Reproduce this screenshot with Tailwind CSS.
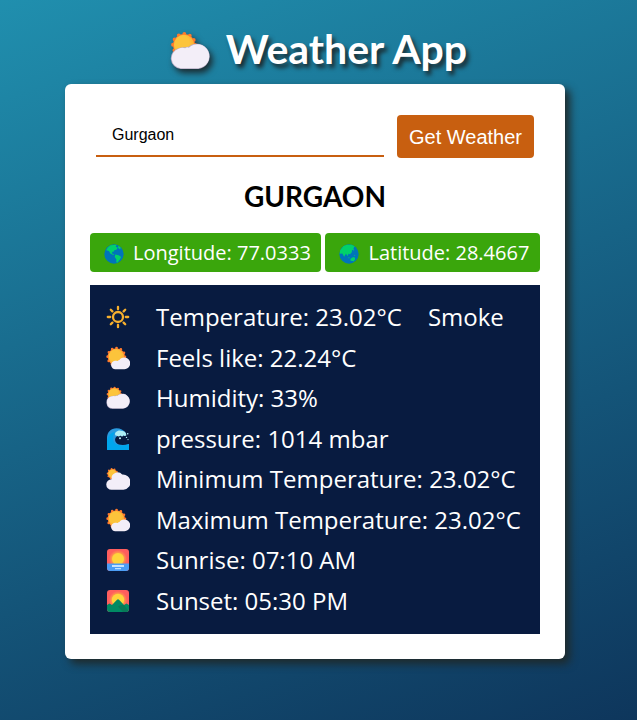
<!DOCTYPE html>
<html lang="en">
<head>
<meta charset="utf-8">
<meta name="viewport" content="width=device-width, initial-scale=1">
<title>Weather App</title>
<script src="https://cdn.jsdelivr.net/npm/@tailwindcss/browser@4"></script>
</head>
<body class="min-h-screen bg-linear-160 from-[#208fae] to-[#0e365c] bg-fixed font-['Open_Sans',sans-serif]">

<!-- Icon library -->
<svg class="absolute size-0" aria-hidden="true">
  <defs>
    <radialGradient id="sunFill" cx="0.4" cy="0.4" r="0.7"><stop offset="0.5" stop-color="#fcc43b"/><stop offset="1" stop-color="#ffa52e"/></radialGradient>
    <radialGradient id="glow" gradientUnits="userSpaceOnUse" cx="12" cy="11" r="10"><stop offset="0.6" stop-color="#ff9a4a"/><stop offset="0.9" stop-color="#ff5e5e"/></radialGradient>
  </defs>
  <symbol id="cloudy" viewBox="0 0 24 24">
    <circle cx="8.4" cy="8.4" r="6.6" fill="#ff8330" stroke="#ff7a2c" stroke-width="2.3" stroke-linecap="round" stroke-dasharray="0 3.456"/>
    <circle cx="8.4" cy="8.4" r="6.1" fill="url(#sunFill)"/>
    <path d="M6.4 22.8A6.4 6.4 0 0 1 5 10.3Q6.9 9.6 9 9.8Q10.2 9.2 11.2 9.5A7.6 7.6 0 1 1 17 22.8Z" fill="#b9aec6"/>
    <path d="M6.4 22.3A6 6 0 0 1 5.2 10.6Q7 9.8 9.1 10.3Q10.3 9.5 11.3 10A7.2 7.2 0 1 1 17 22.3Z" fill="#f3eef8"/>
  </symbol>
  <symbol id="sunny-cloud" viewBox="0 0 24 24">
    <circle cx="10.3" cy="10.8" r="8.6" fill="#ff8330" stroke="#ff7a2c" stroke-width="2.8" stroke-linecap="round" stroke-dasharray="0 4.503"/>
    <circle cx="10.3" cy="10.8" r="7.7" fill="url(#sunFill)"/>
    <path d="M9.6 23.2A4.2 4.2 0 0 1 9 14.8Q10.5 14.5 11.7 15Q12.5 14 13.4 14A5.9 5.9 0 1 1 18 23.2Z" fill="#f3eef8"/>
  </symbol>
  <symbol id="big-cloud" viewBox="0 0 24 24">
    <circle cx="6.5" cy="6.8" r="4.8" fill="#ff8330" stroke="#ff7a2c" stroke-width="2" stroke-linecap="round" stroke-dasharray="0 3.016"/>
    <circle cx="6.5" cy="6.8" r="4.2" fill="url(#sunFill)"/>
    <path d="M5.5 22.8A5.3 5.3 0 0 1 5.6 12.2A6 6 0 0 1 16.2 7.6A7.6 7.6 0 0 1 17.5 22.8Z" fill="#f3eef8"/>
  </symbol>
  <symbol id="sun" viewBox="0 0 24 24">
    <g fill="none" stroke="#f7b02e" stroke-width="2.3" stroke-linecap="round"><circle cx="12" cy="12" r="5"/><path d="M12 1.8V4.2M12 19.8V22.2M1.8 12H4.2M19.8 12H22.2M4.8 4.8L6.4 6.4M17.6 17.6L19.2 19.2M4.8 19.2L6.4 17.6M17.6 6.4L19.2 4.8"/></g>
  </symbol>
  <symbol id="wave" viewBox="0 0 24 24">
    <path d="M1 23V11C1 5 5 1.2 10.5 1.2C14.5 1.2 17.5 3 20 6.2L19.5 8.5H12C9 10 8.4 13 10 15.5C12.5 18.5 18 18.5 23 17V23Z" fill="#2a9be0"/>
    <path d="M1 23V13C2.5 8 5 5.5 9 5C7.5 8 6.5 10 7.2 13.5C8.5 18 15 20 23 17V23Z" fill="#00a6ed"/>
    <path d="M10 5C11.5 3.4 14 3 16 4Q18.5 3.8 19.8 6L20.4 8.2Q18.8 9.8 17.5 8.2Q16.2 10.5 14.5 8.4Q12.5 10.4 11 8.8Q9.2 9 9 7.2Q8.8 5.8 10 5Z" fill="#aeeef5"/>
    <circle cx="14" cy="11.2" r="1" fill="#c5f3f7"/><circle cx="21.7" cy="6.8" r=".8" fill="#aeeef5"/><circle cx="20.5" cy="10.4" r=".7" fill="#aeeef5"/><circle cx="22" cy="12.6" r=".6" fill="#aeeef5"/>
  </symbol>
  <symbol id="sunrise" viewBox="0 0 24 24">
    <rect x="1" y="1" width="22" height="22" rx="3" fill="url(#glow)"/>
    <circle cx="12" cy="11" r="6" fill="#ffd43b"/>
    <path d="M1 15.6H23V20A3 3 0 0 1 20 23H4A3 3 0 0 1 1 20Z" fill="#4b9df5"/>
    <path d="M6 17H18V19H6ZM9 20H15V21.2H9Z" fill="#c2e2ff"/>
  </symbol>
  <symbol id="sunset" viewBox="0 0 24 24">
    <rect x="1" y="1" width="22" height="22" rx="3" fill="url(#glow)"/>
    <circle cx="12" cy="11" r="6.2" fill="#ffd43b"/>
    <path d="M1 16L3.5 14.4L6 16L11 10.8Q12 9.8 13 10.8L18 16L20.5 14.4L23 16V20A3 3 0 0 1 20 23H4A3 3 0 0 1 1 20Z" fill="#008a63"/>
    <path d="M12 17.5L15 16L18 16L22.4 21.8Q21.4 23 20 23H17Z" fill="#067a58"/>
  </symbol>
  <symbol id="globe-americas" viewBox="0 0 24 24">
    <circle cx="12" cy="12" r="11.6" fill="#0074ba"/>
    <path d="M4.5 4.2L8 1.5L15 .9L14 3.2L16.5 4.6L14.8 7L12.5 7.6L11 9.6L9.4 9.2L9.8 11.4L12.4 12.8L11 13.2L7.6 11.4L6 8.4L2.6 7.4ZM17.4 2.2L20.4 4.8L18.8 6.2L16.8 4.2ZM13.6 12.6L17.6 13.4L20.6 15.6L18.8 18.8L16 22.4L14.8 22L14.8 18.2L12.8 15.6Z" fill="#00d26a"/>
  </symbol>
  <symbol id="globe-asia" viewBox="0 0 24 24">
    <circle cx="12" cy="12" r="11.6" fill="#0074ba"/>
    <path d="M5.5 2.4L9.5 .8L15 .9L18.8 2.8L17.4 5L18 8L15.6 7L15.4 10L13.2 12.4L11.2 11.6L10.6 14.8L8.4 11.6L6.2 15.2L4 11.4L.8 11.8L1.4 7.4ZM13.6 18L16 16.2L18.4 15.6L19.6 18L17.8 20.6L14 20.2ZM10.6 16L13 16.4L12 17.4ZM17.6 13L19.6 13.8L18.6 14.4Z" fill="#00d26a"/>
  </symbol>
</svg>

<header class="pt-6 pb-2.5">
  <h1 class="flex items-center justify-center gap-4 font-['Lato',sans-serif] text-[41px] leading-[50px] font-bold text-white [text-shadow:3px_4px_4px_#1b2b30]">
    <svg class="mt-1 size-10 drop-shadow-[3px_4px_3px_#1b2b30]" aria-hidden="true"><use href="#cloudy"/></svg>
    Weather App
  </h1>
</header>

<main class="flex justify-center pr-[7px] pb-10">
  <section class="flex min-h-[575px] w-full max-w-[500px] flex-col rounded-md bg-white p-[25px] shadow-[5px_5px_8px_#1f2a2b]">
    <form class="flex gap-[13px] p-1.5" onsubmit="return false">
      <input type="text" aria-label="City" value="Gurgaon" class="mb-px min-w-0 flex-1 border-b-2 border-[#c85f10] px-4 font-['Liberation_Sans',Arial,sans-serif] text-base text-black outline-none">
      <button type="submit" class="h-[43px] rounded bg-[#c85f10] px-3 font-['Liberation_Sans',Arial,sans-serif] text-xl text-white">Get Weather</button>
    </form>

    <h2 class="mt-3 mb-4 text-center font-['Lato',sans-serif] text-[28px] leading-[41px] font-bold text-black">GURGAON</h2>

    <div class="flex gap-1 text-xl leading-[39px] text-white">
      <p class="flex grow items-center gap-[9px] rounded bg-[#3aa60c] pr-2 pl-3.5 whitespace-nowrap"><svg class="mt-0.5 size-5" aria-hidden="true"><use href="#globe-americas"/></svg>Longitude: 77.0333</p>
      <p class="flex grow items-center gap-[9px] rounded bg-[#3aa60c] pr-2 pl-3.5 whitespace-nowrap"><svg class="mt-0.5 size-5" aria-hidden="true"><use href="#globe-asia"/></svg>Latitude: 28.4667</p>
    </div>

    <ul class="mt-[13px] grid flex-1 auto-rows-fr bg-[#081b40] px-4 pt-3 pb-[13px] text-2xl leading-8 text-white *:flex *:items-center *:gap-[26px]">
      <li><svg class="size-6 shrink-0" aria-hidden="true"><use href="#sun"/></svg><span>Temperature: 23.02°C</span><span>Smoke</span></li>
      <li><svg class="size-6 shrink-0" aria-hidden="true"><use href="#sunny-cloud"/></svg><span>Feels like: 22.24°C</span></li>
      <li><svg class="size-6 shrink-0" aria-hidden="true"><use href="#cloudy"/></svg><span>Humidity: 33%</span></li>
      <li><svg class="size-6 shrink-0" aria-hidden="true"><use href="#wave"/></svg><span>pressure: 1014 mbar</span></li>
      <li><svg class="size-6 shrink-0" aria-hidden="true"><use href="#big-cloud"/></svg><span>Minimum Temperature: 23.02°C</span></li>
      <li><svg class="size-6 shrink-0" aria-hidden="true"><use href="#sunny-cloud"/></svg><span>Maximum Temperature: 23.02°C</span></li>
      <li><svg class="size-6 shrink-0" aria-hidden="true"><use href="#sunrise"/></svg><span>Sunrise: 07:10 AM</span></li>
      <li><svg class="size-6 shrink-0" aria-hidden="true"><use href="#sunset"/></svg><span>Sunset: 05:30 PM</span></li>
    </ul>
  </section>
</main>
</body>
</html>
